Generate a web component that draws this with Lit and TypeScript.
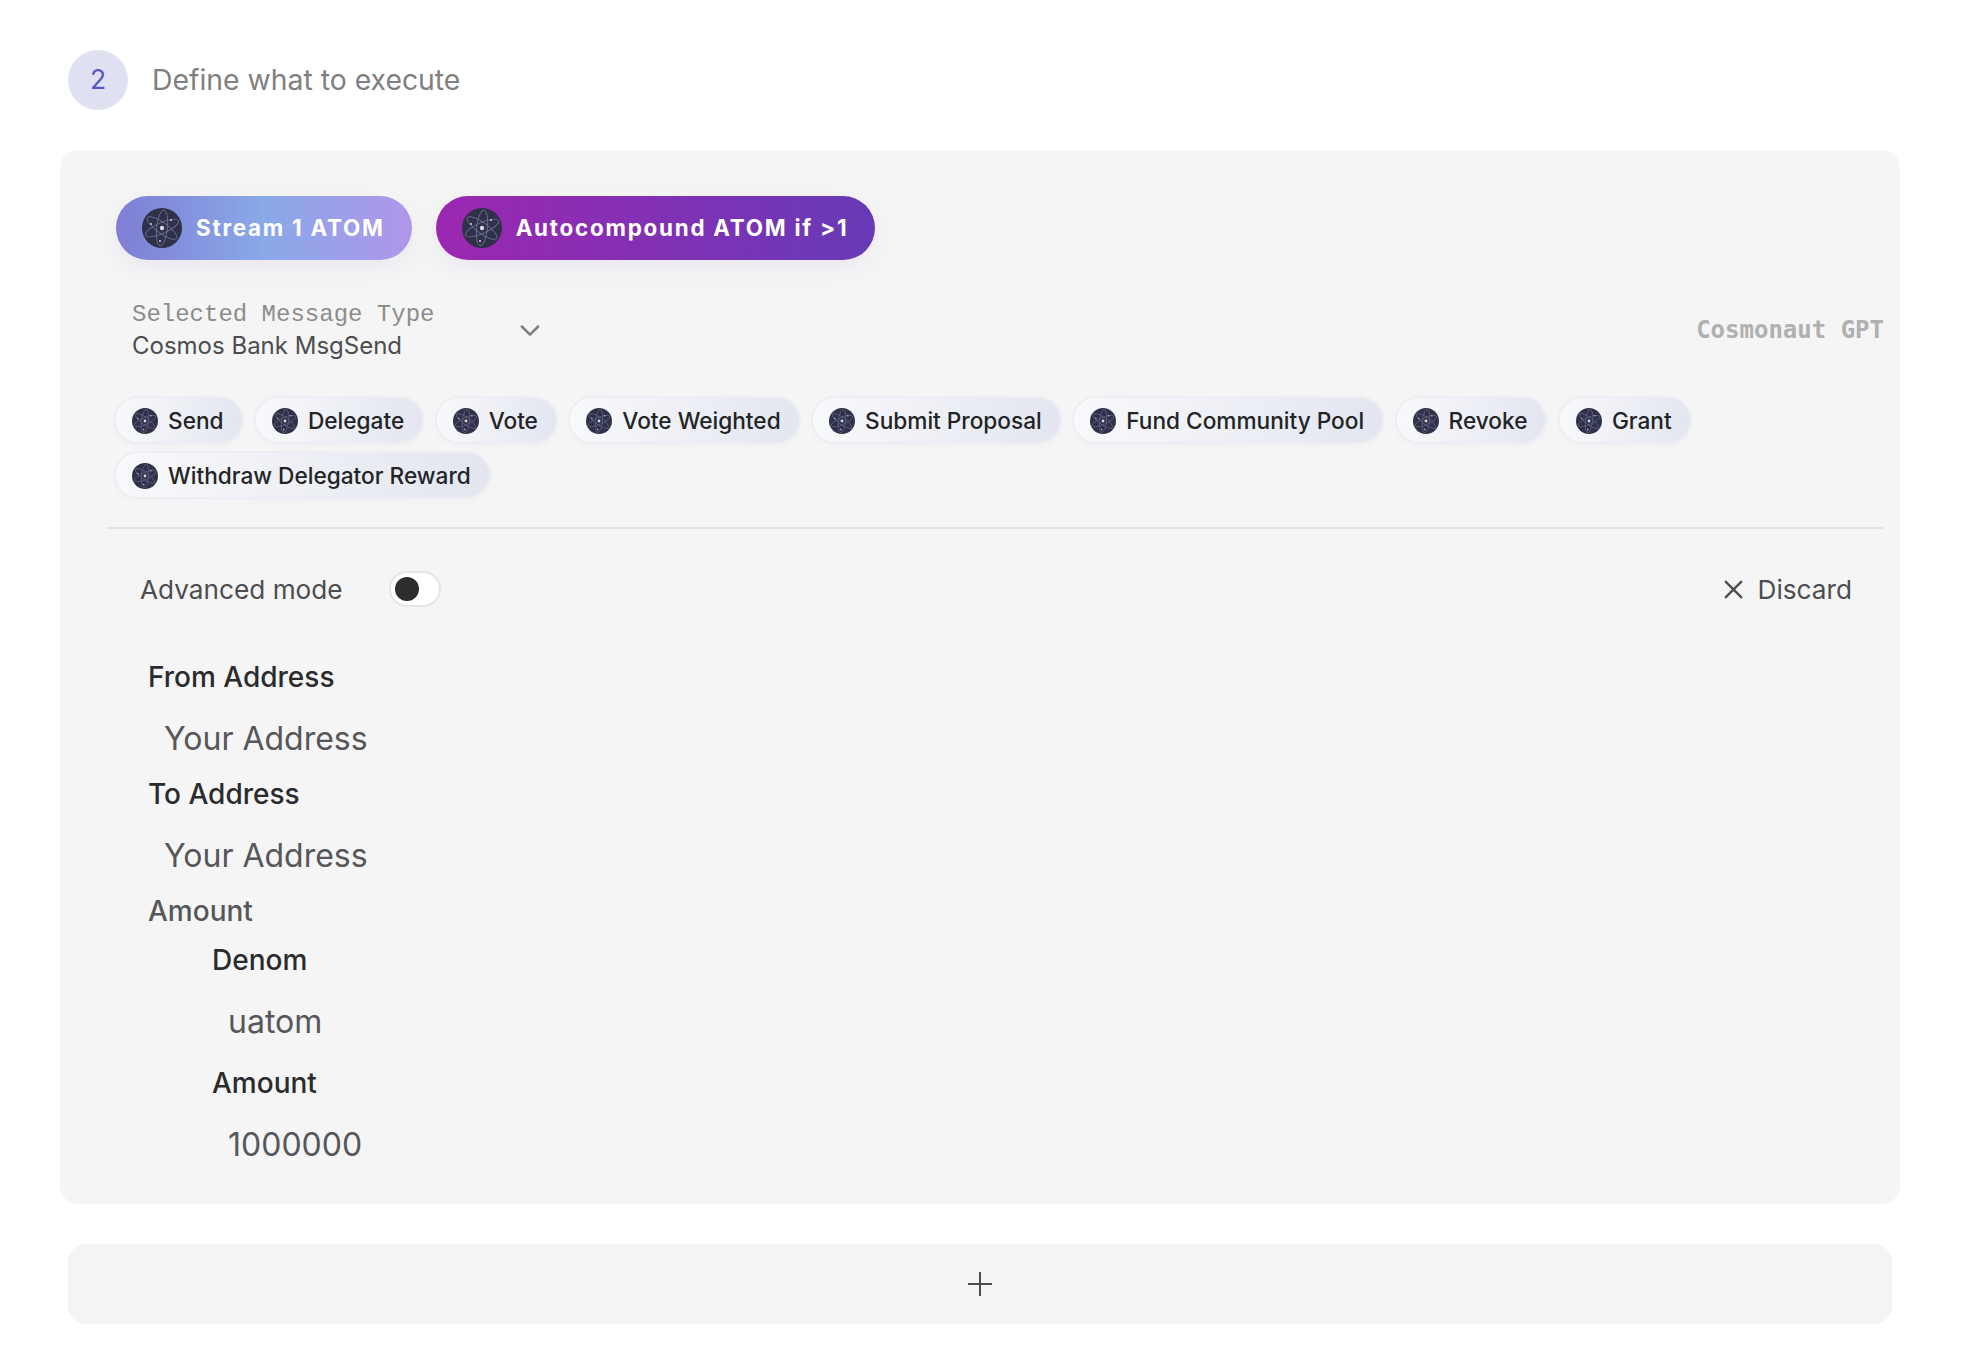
import { LitElement, html, css, svg } from "lit";
import { customElement } from "lit/decorators.js";

const atom = (cls: string) => html`<svg class=${cls} viewBox="0 0 40 40" aria-hidden="true">
  <circle cx="20" cy="20" r="20" fill="#2e3148"></circle>
  ${[6, 66, 126].map(
    (r) => svg`<ellipse cx="20" cy="20" rx="5.4" ry="18" fill="none" stroke="#6d7192" stroke-width="0.9" transform="rotate(${r} 20 20)"></ellipse>`
  )}
  <circle cx="20" cy="20" r="2.2" fill="#d8d9e4"></circle>
  <circle cx="29" cy="12" r="1.1" fill="#c9cad8"></circle>
  <circle cx="9" cy="16" r="1.1" fill="#c9cad8"></circle>
  <circle cx="18" cy="33" r="1.1" fill="#c9cad8"></circle>
</svg>`;

const CHIPS = [
  ["Send", "Delegate", "Vote", "Vote Weighted", "Submit Proposal", "Fund Community Pool", "Revoke", "Grant"],
  ["Withdraw Delegator Reward"],
];

@customElement("app-root")
export class AppRoot extends LitElement {
  static styles = css`
    :host {
      display: block;
      background: #fff;
      min-height: 1368px;
      font-family: Inter, "Liberation Sans", sans-serif;
      color: #4b4d50;
      box-sizing: border-box;
      padding: 50px 82px 0 68px;
    }
    * { box-sizing: border-box; }
    .head { display: flex; align-items: center; gap: 24px; height: 60px; }
    .step {
      width: 60px; height: 60px; border-radius: 50%;
      background: #dfe0f1; color: #5c56c0;
      display: flex; align-items: center; justify-content: center;
      font-size: 26.5px; padding-bottom: 2px;
    }
    .title { font-size: 28.35px; color: #808080; padding-bottom: 1px; }
    .card {
      margin: 40px -8px 0;
      height: 1054px;
      background: #f5f5f5;
      border-radius: 18px;
      padding: 46px 16px 0 47px;
    }
    .presets { display: flex; gap: 24px; margin-left: 9px; }
    .preset {
      height: 64px; border-radius: 32px;
      display: flex; align-items: center; gap: 14px;
      padding: 0 27px 0 26px;
      color: #fff; font-size: 22.4px; font-weight: 700; letter-spacing: 1.76px;
      box-shadow: 0 8px 24px rgba(110, 80, 190, 0.08);
    }
    .preset span { padding-bottom: 2px; }
    .preset.a { background: linear-gradient(90deg, #7f7ed4 0%, #89a9e8 50%, #b096ea 100%); }
    .preset.b { background: linear-gradient(90deg, #9c27b0 0%, #673ab7 100%); }
    .ic-l { width: 40px; height: 40px; flex: none; }
    .ic-s { width: 26px; height: 26px; flex: none; margin-top: 1px; }
    .select-row {
      display: flex; align-items: center; justify-content: space-between;
      margin: 45px 0 0 0; height: 50px;
    }
    .select { display: flex; align-items: center; margin-left: 25px; }
    .select-text { width: 384px; }
    .select-label {
      font-family: "Liberation Mono", "DejaVu Sans Mono", monospace;
      font-size: 24px; line-height: 30px; color: #8c8c8c;
    }
    .select-value { font-size: 24px; line-height: 31px; color: #4b4d50; }
    .chev { width: 28px; height: 28px; }
    .gpt {
      font-family: "DejaVu Sans Mono", "Liberation Mono", monospace;
      font-size: 24px; font-weight: 700; color: #b0b0b0;
    }
    .chips { margin: 43px 0 0 9px; display: flex; flex-direction: column; gap: 11px; }
    .chip-row { display: flex; gap: 14.4px; }
    .chip {
      height: 44px; border-radius: 22px;
      display: flex; align-items: center; gap: 10px;
      padding: 0 18px 0 16px;
      font-size: 22.65px; font-weight: 500; color: #232426;
      background: linear-gradient(90deg, #f8f9fb 0%, #e3e6f0 100%);
      box-shadow: 0 0 0 2px #eceef4, 0 3px 6px rgba(120, 130, 170, 0.05);
    }
    .divider { height: 2px; background: #e3e3e4; margin-top: 30px; }
    .mode {
      display: flex; align-items: center; justify-content: space-between;
      margin-top: 41px; height: 38px; padding: 0 32px 0 33px;
    }
    .mode-left { display: flex; align-items: center; gap: 46px; font-size: 26.2px; }
    .toggle {
      width: 52px; height: 36px; border-radius: 18px;
      background: #fff; border: 2px solid #e5e5e6;
      display: flex; align-items: center; padding-left: 4px;
    }
    .knob { width: 24px; height: 24px; border-radius: 50%; background: #2b2d2e; }
    .discard { display: flex; align-items: center; gap: 14px; font-size: 26.2px; }
    .x { width: 21px; height: 21px; }
    .form { margin: 51px 0 0 41px; }
    .nest { margin-left: 64px; margin-top: 13px; }
    .nest .value { margin: 23.5px 0 23.5px; }
    .label { font-size: 28px; line-height: 36px; font-weight: 500; color: #2a2b2d; }
    .label.group { color: #55575a; }
    .value { font-size: 32px; line-height: 40px; color: #55575a; padding-left: 16px; margin: 24px 0 17px; }
    .add {
      margin-top: 40px; height: 80px; border-radius: 18px;
      background: #f4f4f4;
      display: flex; align-items: center; justify-content: center;
    }
    .plus { width: 24px; height: 24px; }
  `;

  private field(label: string, value: string) {
    return html`<div class="label">${label}</div><div class="value">${value}</div>`;
  }

  render() {
    return html`
      <div class="head">
        <div class="step">2</div>
        <div class="title">Define what to execute</div>
      </div>
      <section class="card">
        <div class="presets">
          <div class="preset a">${atom("ic-l")}<span>Stream 1 ATOM</span></div>
          <div class="preset b">${atom("ic-l")}<span>Autocompound ATOM if &gt;1</span></div>
        </div>
        <div class="select-row">
          <div class="select">
            <div class="select-text">
              <div class="select-label">Selected Message Type</div>
              <div class="select-value">Cosmos Bank MsgSend</div>
            </div>
            <svg class="chev" viewBox="0 0 24 24" fill="none" stroke="#808080" stroke-width="2.2" stroke-linecap="round" stroke-linejoin="round"><path d="M5 9l7 7 7-7"></path></svg>
          </div>
          <div class="gpt">Cosmonaut GPT</div>
        </div>
        <div class="chips">
          ${CHIPS.map(
            (row) => html`<div class="chip-row">
              ${row.map((c) => html`<div class="chip">${atom("ic-s")}<span>${c}</span></div>`)}
            </div>`
          )}
        </div>
        <div class="divider"></div>
        <div class="mode">
          <div class="mode-left">
            <span>Advanced mode</span>
            <div class="toggle"><div class="knob"></div></div>
          </div>
          <div class="discard">
            <svg class="x" viewBox="0 0 20 20" fill="none" stroke="#4b4d50" stroke-width="2.2"><path d="M2 2l16 16M18 2L2 18"></path></svg>
            <span>Discard</span>
          </div>
        </div>
        <div class="form">
          ${this.field("From Address", "Your Address")}
          ${this.field("To Address", "Your Address")}
          <div class="label group">Amount</div>
          <div class="nest">
            ${this.field("Denom", "uatom")}
            ${this.field("Amount", "1000000")}
          </div>
        </div>
      </section>
      <div class="add">
        <svg class="plus" viewBox="0 0 24 24" fill="none" stroke="#4b4d50" stroke-width="2"><path d="M12 0v24M0 12h24"></path></svg>
      </div>
    `;
  }
}
